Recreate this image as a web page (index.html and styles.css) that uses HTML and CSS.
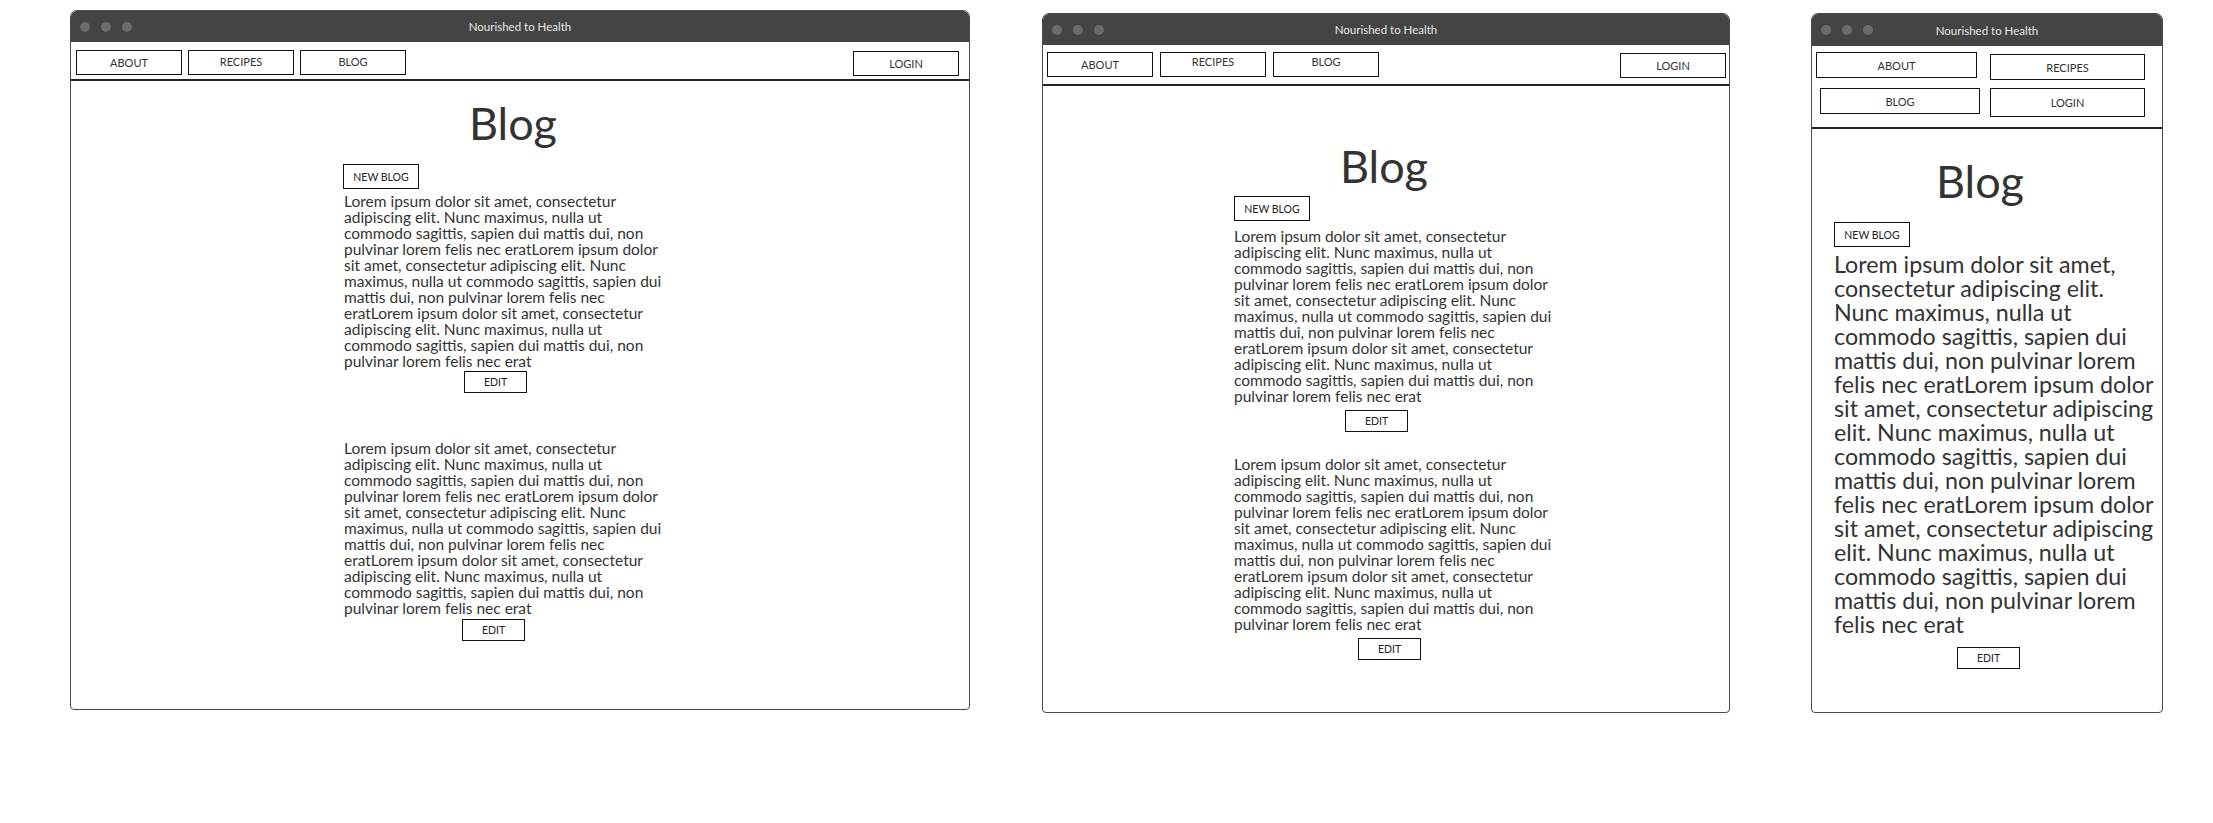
FILE: index.html
```html
<!DOCTYPE html>
<html lang="en">
<head>
  <meta charset="UTF-8">
  <meta name="viewport" content="width=device-width, initial-scale=1.0">
  <title>Nourished to Health - Blog wireframes</title>
  <link rel="stylesheet" href="styles.css">
</head>
<body>

  <div class="screens">

    <!-- desktop -->
    <div class="window window-lg">
      <div class="titlebar">
        <div class="dots"><span></span><span></span><span></span></div>
        <div class="titlebar-text">Nourished to Health</div>
        <div></div>
      </div>
      <nav class="nav">
        <button class="nav-btn">ABOUT</button>
        <button class="nav-btn nav-btn-up">RECIPES</button>
        <button class="nav-btn nav-btn-up">BLOG</button>
        <button class="nav-btn nav-login">LOGIN</button>
      </nav>
      <main class="content">
        <h1 class="title">Blog</h1>
        <div class="feed">
          <button class="new-btn">NEW BLOG</button>
          <div class="post">
            <p class="post-text">Lorem ipsum dolor sit amet, consectetur adipiscing elit. Nunc maximus, nulla ut commodo sagittis, sapien dui mattis dui, non pulvinar lorem felis nec eratLorem ipsum dolor sit amet, consectetur adipiscing elit. Nunc maximus, nulla ut commodo sagittis, sapien dui mattis dui, non pulvinar lorem felis nec eratLorem ipsum dolor sit amet, consectetur adipiscing elit. Nunc maximus, nulla ut commodo sagittis, sapien dui mattis dui, non pulvinar lorem felis nec erat</p>
            <button class="edit-btn">EDIT</button>
          </div>
          <div class="post">
            <p class="post-text">Lorem ipsum dolor sit amet, consectetur adipiscing elit. Nunc maximus, nulla ut commodo sagittis, sapien dui mattis dui, non pulvinar lorem felis nec eratLorem ipsum dolor sit amet, consectetur adipiscing elit. Nunc maximus, nulla ut commodo sagittis, sapien dui mattis dui, non pulvinar lorem felis nec eratLorem ipsum dolor sit amet, consectetur adipiscing elit. Nunc maximus, nulla ut commodo sagittis, sapien dui mattis dui, non pulvinar lorem felis nec erat</p>
            <button class="edit-btn">EDIT</button>
          </div>
        </div>
      </main>
    </div>

    <!-- tablet -->
    <div class="window window-md">
      <div class="titlebar">
        <div class="dots"><span></span><span></span><span></span></div>
        <div class="titlebar-text">Nourished to Health</div>
        <div></div>
      </div>
      <nav class="nav">
        <button class="nav-btn">ABOUT</button>
        <button class="nav-btn nav-btn-up">RECIPES</button>
        <button class="nav-btn nav-btn-up">BLOG</button>
        <button class="nav-btn nav-login">LOGIN</button>
      </nav>
      <main class="content">
        <h1 class="title">Blog</h1>
        <div class="feed">
          <button class="new-btn">NEW BLOG</button>
          <div class="post">
            <p class="post-text">Lorem ipsum dolor sit amet, consectetur adipiscing elit. Nunc maximus, nulla ut commodo sagittis, sapien dui mattis dui, non pulvinar lorem felis nec eratLorem ipsum dolor sit amet, consectetur adipiscing elit. Nunc maximus, nulla ut commodo sagittis, sapien dui mattis dui, non pulvinar lorem felis nec eratLorem ipsum dolor sit amet, consectetur adipiscing elit. Nunc maximus, nulla ut commodo sagittis, sapien dui mattis dui, non pulvinar lorem felis nec erat</p>
            <button class="edit-btn">EDIT</button>
          </div>
          <div class="post">
            <p class="post-text">Lorem ipsum dolor sit amet, consectetur adipiscing elit. Nunc maximus, nulla ut commodo sagittis, sapien dui mattis dui, non pulvinar lorem felis nec eratLorem ipsum dolor sit amet, consectetur adipiscing elit. Nunc maximus, nulla ut commodo sagittis, sapien dui mattis dui, non pulvinar lorem felis nec eratLorem ipsum dolor sit amet, consectetur adipiscing elit. Nunc maximus, nulla ut commodo sagittis, sapien dui mattis dui, non pulvinar lorem felis nec erat</p>
            <button class="edit-btn">EDIT</button>
          </div>
        </div>
      </main>
    </div>

    <!-- mobile -->
    <div class="window window-sm">
      <div class="titlebar">
        <div class="dots"><span></span><span></span><span></span></div>
        <div class="titlebar-text">Nourished to Health</div>
        <div></div>
      </div>
      <nav class="nav">
        <button class="nav-btn">ABOUT</button>
        <button class="nav-btn nav-recipes">RECIPES</button>
        <button class="nav-btn nav-blog">BLOG</button>
        <button class="nav-btn nav-login">LOGIN</button>
      </nav>
      <main class="content">
        <h1 class="title">Blog</h1>
        <div class="feed">
          <button class="new-btn">NEW BLOG</button>
          <div class="post">
            <p class="post-text">Lorem ipsum dolor sit amet, consectetur adipiscing elit. Nunc maximus, nulla ut commodo sagittis, sapien dui mattis dui, non pulvinar lorem felis nec eratLorem ipsum dolor sit amet, consectetur adipiscing elit. Nunc maximus, nulla ut commodo sagittis, sapien dui mattis dui, non pulvinar lorem felis nec eratLorem ipsum dolor sit amet, consectetur adipiscing elit. Nunc maximus, nulla ut commodo sagittis, sapien dui mattis dui, non pulvinar lorem felis nec erat</p>
            <button class="edit-btn">EDIT</button>
          </div>
        </div>
      </main>
    </div>

  </div>

</body>
</html>
```

FILE: styles.css
```css
* {
  box-sizing: border-box;
}
body {
  margin: 0;
  background-color: #fff;
  color: #333;
  font-family: Lato, "Liberation Sans", sans-serif;
}
button {
  font-family: inherit;
  background-color: #fff;
  color: #222;
  border: 1px solid #111;
  padding: 0;
  cursor: pointer;
}

.screens {
  display: flex;
  align-items: flex-start;
  padding: 10px 0 0 70px;
}

/* window frame */
.window {
  display: flex;
  flex-direction: column;
  height: 700px;
  border: 1px solid #4a4a4a;
  border-radius: 7px 7px 4px 4px;
  overflow: hidden;
  background-color: #fff;
}
.window-lg {
  width: 900px;
}
.window-md {
  width: 688px;
  margin-top: 3px;
  margin-left: 72px;
}
.window-sm {
  width: 352px;
  margin-top: 3px;
  margin-left: 81px;
}

.titlebar {
  display: grid;
  grid-template-columns: 1fr auto 1fr;
  align-items: center;
  height: 31px;
  background-color: #444;
}
.window-sm .titlebar {
  height: 32px;
}
.dots {
  display: flex;
  gap: 11px;
  padding-left: 9px;
}
.dots span {
  width: 10px;
  height: 10px;
  border-radius: 50%;
  background-color: #6b6b6b;
}
.titlebar-text {
  font-size: 11.5px;
  color: #e6e6e6;
}

/* nav */
.nav {
  display: flex;
  align-items: flex-start;
  gap: 6px;
  border-bottom: 2px solid #222;
}
.nav-btn {
  width: 106px;
  height: 25px;
  font-size: 11px;
  color: #333;
}
.nav-btn-up {
  padding-bottom: 3px;
}
.nav-login {
  margin-left: auto;
  margin-top: 1px;
}
.window-lg .nav {
  height: 39px;
  padding: 8px 10px 0 5px;
}
.window-md .nav {
  height: 41px;
  gap: 7px;
  padding: 7px 3px 0 4px;
}
.window-md .nav-btn-up {
  padding-bottom: 6px;
}
.window-sm .nav {
  display: grid;
  grid-template-columns: 161px 155px;
  align-content: start;
  column-gap: 13px;
  row-gap: 8px;
  height: 83px;
  padding: 6px 0 0 4px;
}
.window-sm .nav-btn {
  width: 100%;
  height: 26px;
}
.window-sm .nav-recipes {
  margin-top: 2px;
}
.window-sm .nav-blog {
  width: 160px;
  margin-left: 4px;
}
.window-sm .nav-login {
  margin: 0;
  height: 29px;
}

/* page content */
.content {
  flex: 1;
}
.title {
  margin: 0;
  font-size: 45px;
  line-height: 48px;
  font-weight: 400;
  text-align: center;
  color: #333;
}
.feed {
  display: flex;
  flex-direction: column;
  align-items: flex-start;
  width: 320px;
}
.new-btn {
  width: 76px;
  height: 25px;
  font-size: 10.5px;
}
.post-text {
  margin: 0;
  font-size: 15.5px;
  line-height: 16px;
  color: #333;
}
.edit-btn {
  display: block;
  width: 63px;
  height: 22px;
  font-size: 10.5px;
  margin-left: 120px;
}

.window-lg .title { margin-top: 18px; padding-right: 14px; }
.window-lg .feed { margin-left: 273px; }
.window-lg .new-btn { margin-top: 17px; margin-left: -1px; }
.window-lg .post-text { margin-top: 4px; }
.window-lg .edit-btn { margin-top: 2px; }
.window-lg .post + .post .post-text { margin-top: 47px; }
.window-lg .post + .post .edit-btn { margin-top: 3px; margin-left: 118px; }

.window-md .title { margin-top: 56px; padding-right: 4px; }
.window-md .feed { margin-left: 191px; }
.window-md .new-btn { margin-top: 6px; }
.window-md .post-text { margin-top: 7px; }
.window-md .edit-btn { margin-top: 6px; margin-left: 111px; }
.window-md .post + .post .post-text { margin-top: 24px; }
.window-md .post + .post .edit-btn { margin-left: 124px; }

.window-sm .title { margin-top: 28px; padding-right: 14px; }
.window-sm .feed { margin-left: 22px; }
.window-sm .new-btn { margin-top: 17px; }
.window-sm .post-text {
  margin-top: 5px;
  font-size: 23.25px;
  line-height: 24px;
}
.window-sm .edit-btn { margin-top: 11px; margin-left: 123px; }
```
